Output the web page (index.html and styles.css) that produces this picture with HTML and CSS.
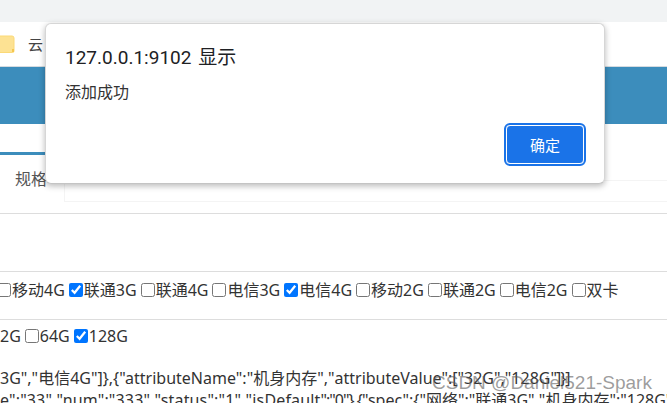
FILE: index.html
```html
<!DOCTYPE html>
<html lang="zh">
<head>
<meta charset="utf-8">
<title>添加成功</title>
<link rel="stylesheet" href="styles.css">
</head>
<body>
<div class="toolbar"></div>
<div class="bookmarks">
  <svg class="folder" width="15" height="18" viewBox="0 0 15 18"><path d="M-4 2.5a1.5 1.5 0 0 1 1.5-1.5H12a2 2 0 0 1 2 2v13a1.500 1.500 0 0 1-1.500 1.500H-4z" fill="#fde293" stroke="#fbd977"/><path d="M12 17v-3h2v3z" fill="#f4c64f"/></svg>
  <span class="bookmark-text">云</span>
</div>
<div class="banner"></div>
<div class="tabs">
  <div class="tab">规格</div>
  <div class="tab-panel"></div>
</div>
<div class="row row-empty"></div>
<div class="row row-spec">
  <input type="checkbox"><span>移动4G</span>
  <input type="checkbox" checked><span>联通3G</span>
  <input type="checkbox"><span>联通4G</span>
  <input type="checkbox"><span>电信3G</span>
  <input type="checkbox" checked><span>电信4G</span>
  <input type="checkbox"><span>移动2G</span>
  <input type="checkbox"><span>联通2G</span>
  <input type="checkbox"><span>电信2G</span>
  <input type="checkbox"><span>双卡</span>
</div>
<div class="row row-memory">
  <span>2G</span>
  <input type="checkbox"><span>64G</span>
  <input type="checkbox" checked><span>128G</span>
</div>
<div class="json">
  <div class="json-line">3G","电信4G"]},{"attributeName":"机身内存","attributeValue":["32G","128G<span class="tight">"]}]</span></div>
  <div class="json-line"><span class="wide">e":"33","num":"333","status":"1","isDefault</span><span class="tight">":"0"},{</span>"spec":{"网络":"联通3G","机身内存":"128G"}</div>
</div>
<div class="watermark">CSDN @Daniel521-Spark</div>
<div class="dialog">
  <div class="dialog-title">127.0.0.1:9102 显示</div>
  <div class="dialog-message">添加成功</div>
  <div class="dialog-actions"><button class="ok">确定</button></div>
</div>
</body>
</html>
```
FILE: styles.css
```css
* { box-sizing: border-box; }
html, body { margin: 0; padding: 0; }
body {
  width: 667px;
  height: 403px;
  overflow: hidden;
  position: relative;
  background: #fff;
  color: #333;
  font-family: "Noto Sans", "Noto Sans CJK SC", sans-serif;
  font-size: 16px;
}
.toolbar { height: 22px; background: #f1f3f4; }
.bookmarks {
  height: 45px;
  display: flex;
  align-items: center;
  gap: 13px;
  border-bottom: 1px solid #d5dbe0;
  padding-bottom: 1px;
}
.folder { display: block; flex: none; }
.bookmark-text { font-size: 15px; color: #444; }
.banner { height: 57px; background: #3c8dbc; }
.tabs { height: 90px; padding-top: 28px; display: flex; border-bottom: 1px solid #ddd; }
.tab {
  width: 45px;
  height: 61px;
  border-top: 3px solid #3c8dbc;
  padding: 11px 0 0 15px;
  white-space: nowrap;
  color: #555;
  flex: none;
}
.tab-panel {
  margin: 28px 0 0 19px;
  flex: 1;
  height: 22px;
  border: 1px solid #f4f4f4;
  border-right: 0;
}
.row {
  display: flex;
  align-items: center;
  white-space: nowrap;
  border-bottom: 1px solid #ddd;
  line-height: 20px;
}
.row-empty { height: 58px; }
.row-spec { height: 48px; padding-bottom: 11px; margin-left: -3px; }
.row-memory { height: 48px; padding-bottom: 16px; border-bottom: 0; }
.row input { margin: 0; width: 14px; height: 14px; flex: none; }
.row span { margin: 0 4px 0 1px; }
.row-memory span:first-child { margin-left: 0; }
.json { white-space: nowrap; line-height: 22px; color: #333; margin-top: -1px; }
.json-line { height: 22px; }
.wide { letter-spacing: .15px; }
.tight { letter-spacing: -1px; }
.watermark {
  position: absolute;
  left: 432px;
  top: 372px;
  font-family: "Liberation Sans", sans-serif;
  font-size: 19px;
  color: rgba(90, 90, 90, .6);
  white-space: nowrap;
}
.dialog {
  position: absolute;
  left: 45px;
  top: 23px;
  width: 560px;
  height: 161px;
  background: #fff;
  border-radius: 6px;
  border: 1px solid #d6d6d6;
  border-bottom-color: #c4c4c4;
  box-shadow: 0 2px 6px rgba(0, 0, 0, .28);
  padding: 20px 20px 0 19px;
  display: flex;
  flex-direction: column;
}
.dialog-title { font-size: 19px; line-height: 28px; color: #202124; word-spacing: 2px; font-family: "Roboto", "Noto Sans CJK SC", sans-serif; }
.dialog-message { font-size: 16px; line-height: 22px; margin-top: 9px; color: #333; }
.dialog-actions { margin-top: auto; margin-bottom: 19px; display: flex; justify-content: flex-end; }
.ok {
  width: 78px;
  height: 39px;
  background: #1a73e8;
  color: #fff;
  border: 1px solid #fff;
  outline: 2px solid #1a73e8;
  border-radius: 4px;
  font-family: inherit;
  font-size: 15px;
}
```
